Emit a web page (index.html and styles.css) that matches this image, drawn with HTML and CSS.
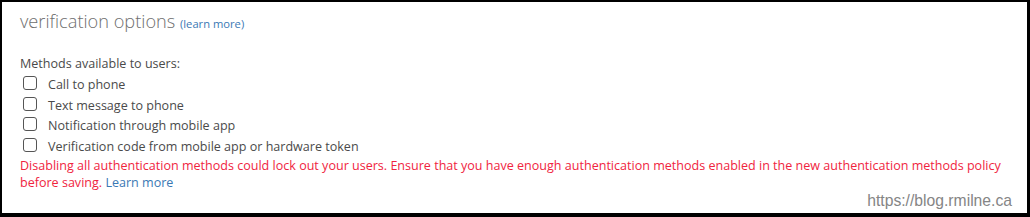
FILE: index.html
```html
<!DOCTYPE html>
<html lang="en">
<head>
    <meta charset="UTF-8">
    <title>verification options</title>
    <link rel="stylesheet" href="styles.css">
</head>
<body>
    <div class="frame">
        <h2 class="section-title">verification options <a href="#" class="small-link">(learn more)</a></h2>

        <!-- methods list -->
        <div class="methods">
            <div class="methods-label">Methods available to users:</div>
            <label class="method"><span class="box"></span>Call to phone</label>
            <label class="method"><span class="box"></span>Text message to phone</label>
            <label class="method"><span class="box"></span>Notification through mobile app</label>
            <label class="method"><span class="box"></span>Verification code from mobile app or hardware token</label>
        </div>

        <p class="warning">Disabling all authentication methods could lock out your users. Ensure that you have enough authentication methods enabled in the new authentication methods policy before saving. <a href="#" class="link">Learn more</a></p>

        <div class="watermark">https://blog.rmilne.ca</div>
    </div>
</body>
</html>
```

FILE: styles.css
```css
body{
    margin: 0;
    background-color: #000;
}
.frame{
    position: relative;
    width: 1030px;
    height: 217px;
    box-sizing: border-box;
    border-style: solid;
    border-color: #000;
    border-width: 2px 3px 4px 2px;
    background-color: #fff;
    padding: 7px 0 0 18px;
    font-family: "Open Sans", "Noto Sans", sans-serif;
    color: #4a4a4a;
}
.section-title{
    margin: 0;
    font-size: 18.2px;
    font-weight: 300;
    line-height: 24px;
    color: #6e6e6e;
}
.small-link{
    font-size: 11.2px;
    font-weight: 400;
    color: #3a78b4;
    text-decoration: none;
}
.methods{
    margin-top: 18px;
    font-size: 12.55px;
}
.methods-label{
    line-height: 20px;
}
.method{
    display: flex;
    align-items: flex-start;
    height: 20.67px;
    line-height: 21px;
    padding-left: 3px;
}
.box{
    width: 12px;
    height: 12px;
    margin-top: 2px;
    border: 1px solid #555;
    border-radius: 3px;
    margin-right: 11px;
}
.warning{
    margin: 0;
    width: 990px;
    font-size: 12.55px;
    line-height: 17px;
    color: #f0243e;
}
.link{
    color: #3a78b4;
    text-decoration: none;
}
.watermark{
    position: absolute;
    right: 15px;
    bottom: 4px;
    font-family: "Liberation Sans", Arial, sans-serif;
    font-size: 15.7px;
    line-height: 16px;
    color: #858585;
}
```
